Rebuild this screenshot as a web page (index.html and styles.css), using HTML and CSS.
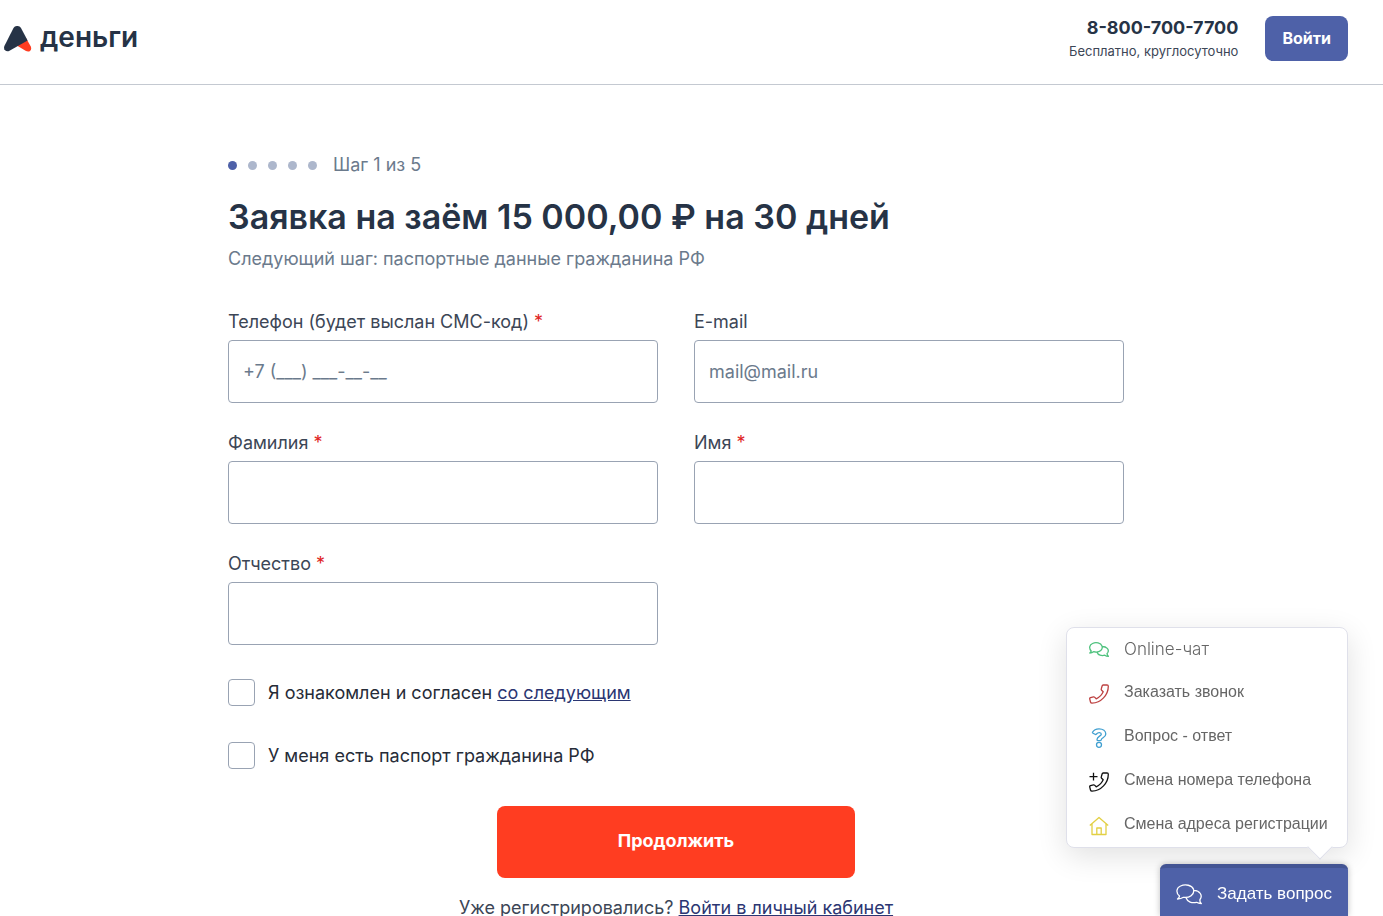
FILE: index.html
```html
<!DOCTYPE html>
<html lang="ru">
<head>
<meta charset="UTF-8">
<meta name="viewport" content="width=device-width, initial-scale=1.0">
<title>Заявка на заём</title>
<link rel="stylesheet" href="styles.css">
</head>
<body>
<header class="header">
    <a class="logo" href="#">
        <svg class="logo-icon" viewBox="0 0 28 26" aria-hidden="true">
            <path fill="#ff3d21" d="M22 12 L26.800 20.500 C28.300 24.500 25 26.500 22 25 L12 19 Z"/>
            <path fill="#263346" d="M9.500 2 C11.200 -.7 15.300 -.7 17 2 L23.600 14.500 L5.500 24.800 C2.500 26.500 -1.200 24 .4 20 Z"/>
        </svg>
        <span>деньги</span>
    </a>
    <div class="header-right">
        <div class="contacts">
            <a class="phone" href="tel:88007007700">8-800-700-7700</a>
            <span class="note">Бесплатно, круглосуточно</span>
        </div>
        <button class="login" type="button">Войти</button>
    </div>
</header>
<main class="main">
    <form class="form">
        <div class="steps">
            <ul class="dots">
                <li class="active"></li>
                <li></li>
                <li></li>
                <li></li>
                <li></li>
            </ul>
            <span>Шаг 1 из 5</span>
        </div>
        <h1>Заявка на заём 15 000,00 ₽ на 30 дней</h1>
        <p class="next">Следующий шаг: паспортные данные гражданина РФ</p>
        <div class="fields">
            <div class="field">
                <label for="phone">Телефон (будет выслан СМС-код) <i>*</i></label>
                <input type="tel" id="phone" placeholder="+7 (___) ___-__-__">
            </div>
            <div class="field">
                <label for="email">E-mail</label>
                <input type="email" id="email" placeholder="mail@mail.ru">
            </div>
            <div class="field">
                <label for="surname">Фамилия <i>*</i></label>
                <input type="text" id="surname">
            </div>
            <div class="field">
                <label for="name">Имя <i>*</i></label>
                <input type="text" id="name">
            </div>
            <div class="field">
                <label for="patronymic">Отчество <i>*</i></label>
                <input type="text" id="patronymic">
            </div>
        </div>
        <div class="checks">
            <div class="check">
                <input type="checkbox" id="agree">
                <label for="agree">Я ознакомлен и согласен <a href="#">со следующим</a></label>
            </div>
            <div class="check">
                <input type="checkbox" id="passport">
                <label for="passport">У меня есть паспорт гражданина РФ</label>
            </div>
        </div>
        <button class="submit" type="submit">Продолжить</button>
        <p class="registered">Уже регистрировались? <a href="#">Войти в личный кабинет</a></p>
    </form>
</main>

<ul class="help">
    <li><a href="#">
        <svg class="green" viewBox="0 0 20 20"><path d="M2.200 11 C-.2 8.500 .2 5 3.500 3.500 C7 1.900 11.800 2.900 13 6 C14.200 9.500 10.800 12.300 6.500 12 L4.500 11.700 Q3 13 .8 13 Q2 12 2.200 11 Z M13.300 6.500 C17.500 6.500 20.500 9.500 18.800 12.500 L18 13.700 Q18.300 15.500 19.400 16.300 Q17.300 16.300 15.800 15.200 C12.500 16.200 9 15 8 12.200"/></svg>
        <span class="chat">Online-чат</span>
    </a></li>
    <li><a href="#">
        <svg class="red" viewBox="0 0 20 20"><path d="M14.200 1 L18 .8 Q19.300 .8 19.300 2.200 C19.300 11 12 18.800 3 19.200 Q1.800 19.200 1.500 18 L.7 14.800 Q.6 14 1.500 13.700 L4.500 12.900 Q5.200 12.800 5.800 13.400 L7.200 14.800 C10.500 13.300 13 10.500 14.200 7.800 L12.600 6.200 Q12 5.600 12.300 4.800 L13.200 1.800 Q13.400 1.100 14.200 1 Z"/></svg>
        <span>Заказать звонок</span>
    </a></li>
    <li><a href="#">
        <svg class="blue" viewBox="0 0 20 20"><path d="M3.500 4.300 C4.800 1.800 7.300 .8 10 .8 C14 .8 16.800 3 16.800 6 C16.800 9.500 12.500 9.800 12.200 11.800 Q12 12.700 11 12.700 H9.200 Q8 12.700 8 11.500 C8 8.500 12.300 8 12.300 6.200 C12.300 4.300 9 4 7.500 6 Q6.800 6.800 6 6.300 L4 5.200 Q3.200 4.800 3.500 4.300 Z"/><circle cx="10" cy="16.800" r="2.500"/></svg>
        <span>Вопрос - ответ</span>
    </a></li>
    <li><a href="#">
        <svg class="black" viewBox="0 0 20 20"><path d="M4.500 .8 V8.500 M.5 4.600 H8.500 M14.200 1 L18 .8 Q19.300 .8 19.300 2.200 C19.300 11 12 18.800 3 19.200 Q1.800 19.200 1.500 18 L.7 14.800 Q.6 14 1.500 13.700 L4.500 12.900 Q5.200 12.800 5.800 13.400 L7.200 14.800 C10.500 13.300 13 10.500 14.200 7.800 L12.600 6.200 Q12 5.600 12.300 4.800 L13.200 1.800 Q13.400 1.100 14.200 1 Z"/></svg>
        <span>Смена номера телефона</span>
    </a></li>
    <li><a href="#">
        <svg class="yellow" viewBox="0 0 20 20"><path d="M.8 9.500 L10 1.500 L19.200 9.500 M3 8 V18.500 H17 V8 M7.800 18.500 V12 H12.200 V18.500"/></svg>
        <span>Смена адреса регистрации</span>
    </a></li>
</ul>
<button class="ask" type="button">
    <svg viewBox="0 0 26 22"><path d="M3.500 12 C-.4 8.800 .3 3.800 4.500 2 C9.500 -.3 16 1.200 17.500 5.300 C19 10.700 13 14.200 7.500 13.300 Q5 15 1.500 15 Q3.500 13.600 3.500 12 Z M18 6.300 C23.800 6.600 27 11.500 24 15.500 Q23.500 18 25.300 19.500 Q22.500 19.500 20.500 18.300 C16 19.500 11.500 18 10 13.700"/></svg>
    <span>Задать вопрос</span>
</button>
</body>
</html>
```
FILE: styles.css
```css
* {
    box-sizing: border-box;
}
body {
    margin: 0;
    font: 400 18px/24px Inter, sans-serif;
    color: #3c4656;
    background: #fff;
}
ul, p, h1 {
    margin: 0;
    padding: 0;
    list-style: none;
}
button {
    border: 0;
    font-family: inherit;
    color: #fff;
    cursor: pointer;
}
.header {
    display: flex;
    justify-content: space-between;
    align-items: flex-start;
    height: 85px;
    padding: 16px 35px 0 4px;
    border-bottom: 1px solid #c4c9d1;
}
.logo {
    display: flex;
    align-items: center;
    gap: 8px;
    padding-top: 5px;
    font-size: 28px;
    line-height: 32px;
    font-weight: 600;
    color: #263346;
    text-decoration: none;
}
.logo-icon {
    width: 28px;
    height: 26px;
    margin-top: 3px;
}
.header-right {
    display: flex;
    gap: 27px;
}
.contacts {
    display: flex;
    flex-direction: column;
    text-align: right;
}
.phone {
    font-weight: 700;
    color: #263346;
    text-decoration: none;
}
.note {
    font-size: 13px;
    line-height: 22px;
}
.login {
    height: 45px;
    padding: 0 17px 2px;
    border-radius: 8px;
    background: #4e61a8;
    font-size: 16px;
    font-weight: 700;
}
.main {
    padding: 68px 31px 0 0;
}
.form {
    max-width: 896px;
    margin: 0 auto;
}
.steps {
    display: flex;
    align-items: center;
    gap: 16px;
    color: #6b7a8c;
}
.dots {
    display: flex;
    gap: 11px;
}
.dots li {
    width: 9px;
    height: 9px;
    border-radius: 50%;
    background: #adb7cc;
}
.dots .active {
    background: #4e61a8;
}
h1 {
    margin: 18px 0 8px;
    font-size: 34px;
    line-height: 44px;
    font-weight: 600;
    color: #263346;
}
.next {
    color: #6b7a8c;
}
.fields {
    display: grid;
    grid-template-columns: 1fr 1fr;
    gap: 28px 36px;
    margin-top: 39px;
}
.field label {
    display: block;
    margin-bottom: 6px;
}
.field i {
    font-style: normal;
    color: #e02424;
}
.field input {
    display: block;
    width: 100%;
    height: 63px;
    padding: 0 14px;
    border: 1px solid #99a3b3;
    border-radius: 4px;
    font: inherit;
    color: inherit;
}
.field input::placeholder {
    color: #6b7a8c;
}
.checks {
    display: grid;
    gap: 36px;
    margin: 34px 0 37px;
}
.check {
    display: flex;
    align-items: center;
    gap: 13px;
    color: #262c38;
}
.check input {
    appearance: none;
    width: 27px;
    height: 27px;
    margin: 0;
    border: 1px solid #99a3b3;
    border-radius: 4px;
}
.check input:checked {
    background: #4e61a8;
}
.form a {
    color: #2b3672;
}
.submit {
    display: block;
    width: 40%;
    height: 72px;
    margin: 0 auto 20px;
    padding-bottom: 4px;
    border-radius: 8px;
    background: #ff3d21;
    font-size: 18px;
    font-weight: 700;
}
.registered {
    line-height: 20px;
    text-align: center;
}
/* help menu */
.help {
    position: fixed;
    right: 35px;
    bottom: 68px;
    width: 282px;
    border: 1px solid #dfe0ea;
    border-radius: 8px;
    background: #fff;
    box-shadow: 0 8px 30px rgba(0, 0, 0, .12);
}
.help:after {
    position: absolute;
    right: 18px;
    bottom: -9px;
    content: '';
    width: 17px;
    height: 17px;
    border: solid #dfe0ea;
    border-width: 0 1px 1px 0;
    background: #fff;
    transform: rotate(45deg);
}
.help a {
    display: flex;
    align-items: center;
    gap: 15px;
    height: 44px;
    padding: 0 22px 2px;
    font: 16px/20px "Liberation Sans", Arial, sans-serif;
    color: #666;
    text-decoration: none;
    white-space: nowrap;
}
.help li:first-child a {
    height: 43px;
}
.help .chat {
    font: 300 17px/20px Inter, sans-serif;
}
.help svg,
.ask svg {
    flex: none;
    width: 20px;
    height: 20px;
    margin-top: 3px;
    fill: none;
    stroke: currentColor;
    stroke-width: 1.3;
    stroke-linejoin: round;
}
.green { color: #4fc27e; }
.red { color: #bd4141; }
.blue { color: #409fd0; }
.black { color: #111; }
.yellow { color: #e2d044; }
.ask {
    position: fixed;
    right: 35px;
    bottom: 0;
    display: flex;
    align-items: center;
    gap: 15px;
    height: 52px;
    padding: 3px 16px 0;
    border-top: 4px solid #435493;
    border-radius: 6px 6px 0 0;
    background: #4e61a8;
    box-shadow: 0 0 6px rgba(0, 0, 0, .25);
    font: 17px/20px "Liberation Sans", Arial, sans-serif;
}
.ask svg {
    width: 26px;
    height: 22px;
}
```
